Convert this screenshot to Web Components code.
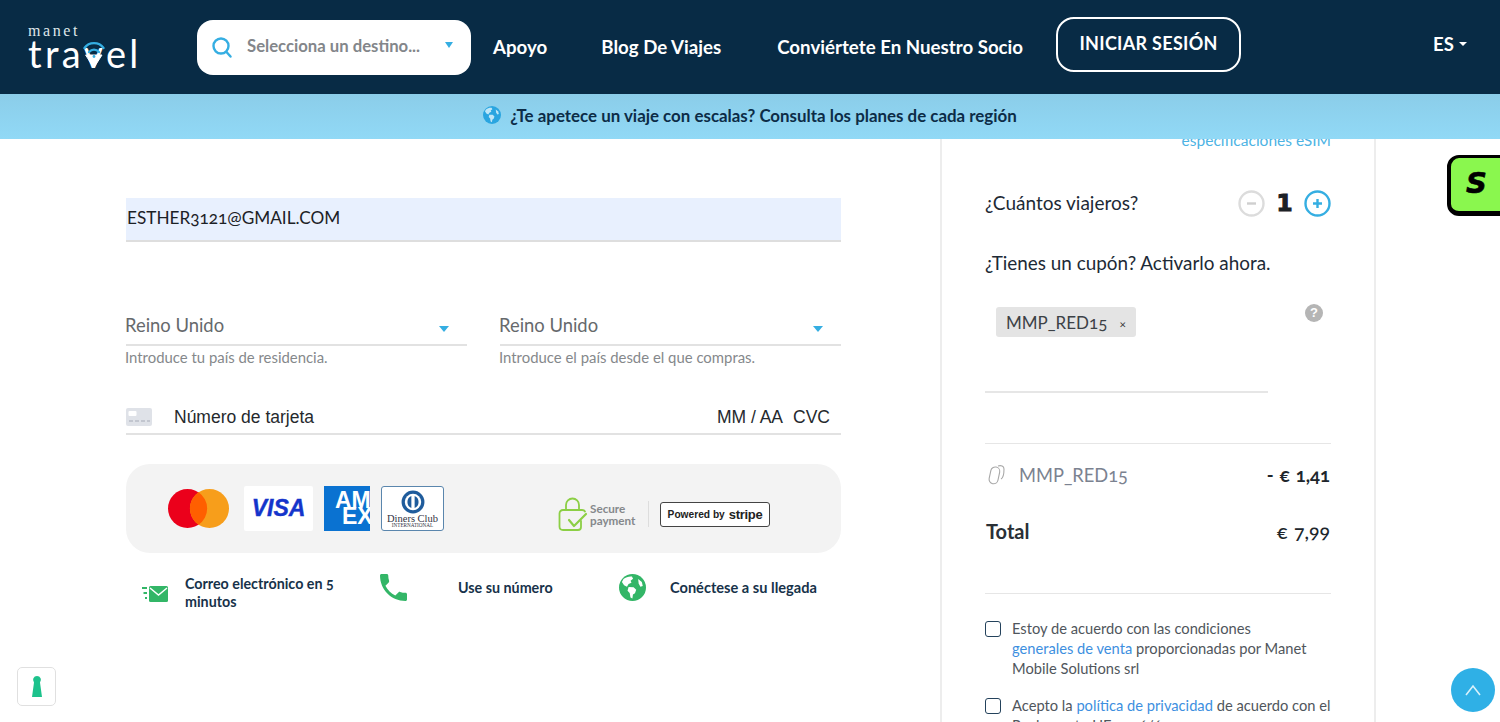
<!DOCTYPE html>
<html lang="es">
<head>
<meta charset="utf-8">
<title>Manet Travel</title>
<style>
  html, body { margin: 0; height: 722px; overflow: hidden; background: #fff; }
  body { font-family: Lato, "Open Sans", sans-serif; color: #1d2a36; font-variant-numeric: oldstyle-nums; }
</style>
</head>
<body>
<mt-header></mt-header>
<mt-promo>¿Te apetece un viaje con escalas? Consulta los planes de cada región</mt-promo>
<mt-page>
  <mt-checkout></mt-checkout>
  <mt-summary></mt-summary>
</mt-page>
<mt-floaters></mt-floaters>

<script>
const globe = (land, sea) => `
  <svg viewBox="0 0 24 24" width="100%" height="100%">
    <circle cx="12" cy="12" r="12" fill="${sea}"/>
    <path d="M4 4.500c2-1.600 5-2.600 7.500-2.200l1 2-2.200 1.600.8 1.800-2.600 1.200-1.400 2.400-2.600-1.400L2.600 7z" fill="${land}"/>
    <path d="M8.500 11.500l4.500.3 2.300 2.300-1.100 3-1.800 1.200-.5 3.500-1.700-1-.7-4-1.900-2z" fill="${land}"/>
    <path d="M17 4.500l3.300 2.700.8 3.500-2.100.6-1.500-2.800z" fill="${land}"/>
  </svg>`;

class MtHeader extends HTMLElement {
  constructor() {
    super();
    this.attachShadow({ mode: 'open' });
  }
  connectedCallback() {
    this.shadowRoot.innerHTML = `
      <style>
        :host { display: flex; align-items: flex-start; height: 94px; background: #082b45; color: #fff; font-weight: 700; font-size: 18.700px; }
        .logo { position: relative; width: 108px; margin: 22px 61px 0 28px; line-height: 1; font-weight: 400; }
        .manet { font: 400 16px "Liberation Serif", serif; letter-spacing: 2.600px; color: #dfe6ea; display: block; height: 15px; }
        .travel { font: 400 38px/32px Lato, sans-serif; letter-spacing: 3.300px; display: block; white-space: nowrap; }
        .pin { position: absolute; left: 54px; top: 18px; width: 24px; height: 28px; }
        .search { box-sizing: border-box; width: 274px; height: 55px; margin-top: 20px; background: #fff; border-radius: 16px; display: flex; align-items: center; padding: 0 18px 0 15px; color: #83868a; font-size: 16.700px; }
        .search svg { width: 20px; height: 21px; margin-right: 15px; flex: none; }
        .search span { flex: 1; white-space: nowrap; margin-top: -3px; }
        .caret { width: 0; height: 0; border: 4.500px solid transparent; border-top: 6px solid #35aee2; border-bottom: 0; margin-top: -5px; }
        nav { display: flex; align-items: center; height: 94px; }
        nav a { white-space: nowrap; margin-top: -1px; }
        .login { box-sizing: border-box; width: 185px; height: 55px; border: 2px solid #fff; border-radius: 18px; margin: 17px 0 0 33px; display: flex; align-items: center; justify-content: center; font-size: 18px; font-weight: 700; letter-spacing: .3px; padding-bottom: 3px; }
        .lang { margin: 33px 0 0 192px; font-size: 18.500px; display: flex; align-items: center; gap: 5px; }
        .lang i { width: 0; height: 0; border: 4px solid transparent; border-top: 4px solid #fff; border-bottom: 0; }
      </style>
      <div class="logo">
        <span class="manet">manet</span>
        <span class="travel">travel</span>
        <svg class="pin" viewBox="0 0 24 28" fill="none" stroke="#35aee2" stroke-width="2.400" stroke-linecap="round">
          <path d="M4 15h16l-8 12.500z" fill="#fff" stroke="#fff" stroke-width="1" stroke-linejoin="round"/>
          <path d="M2.500 8C7 1.500 17 1.500 21.500 8"/>
          <path d="M7 12c3-3.200 7-3.200 10 0"/>
          <circle cx="12" cy="16.500" r="1.400" fill="#35aee2" stroke="none"/>
        </svg>
      </div>
      <div class="search">
        <svg viewBox="0 0 20 21" fill="none" stroke="#35aee2" stroke-width="2.400" stroke-linecap="round">
          <circle cx="9" cy="9" r="7.500"/>
          <path d="M14.500 15l4 4.500"/>
        </svg>
        <span>Selecciona un destino...</span>
        <i class="caret"></i>
      </div>
      <nav>
        <a style="margin-left:22px">Apoyo</a>
        <a style="margin-left:54px">Blog De Viajes</a>
        <a style="margin-left:56px">Conviértete En Nuestro Socio</a>
      </nav>
      <div class="login">INICIAR SESIÓN</div>
      <div class="lang">ES <i></i></div>
    `;
  }
}

class MtPromo extends HTMLElement {
  constructor() {
    super();
    this.attachShadow({ mode: 'open' });
  }
  connectedCallback() {
    this.shadowRoot.innerHTML = `
      <style>
        :host { display: flex; align-items: center; justify-content: center; box-sizing: border-box; height: 45px; padding-bottom: 3px; position: relative; z-index: 2;
          background: linear-gradient(180deg, #8bcde9, #91d9f6); color: #0c2c47; font-size: 16.900px; font-weight: 700; gap: 9px; }
        .g { width: 18px; height: 18px; }
      </style>
      <span class="g">${globe('#bfe6f7', '#2aa5e0')}</span>
      <slot></slot>
    `;
  }
}

class MtPage extends HTMLElement {
  constructor() {
    super();
    this.attachShadow({ mode: 'open' });
  }
  connectedCallback() {
    this.shadowRoot.innerHTML = `
      <style>
        :host { display: grid; grid-template-columns: 940px 436px; height: 583px; overflow: hidden; }
      </style>
      <slot></slot>
    `;
  }
}

class MtSelect extends HTMLElement {
  constructor() {
    super();
    this.attachShadow({ mode: 'open' });
  }
  connectedCallback() {
    this.shadowRoot.innerHTML = `
      <style>
        :host { display: block; }
        .box { height: 35px; border-bottom: 2px solid #e2e2e2; display: flex; justify-content: space-between; align-items: center; font-size: 18.400px; color: #66696c; }
        .box span { margin: -4px 0 0 -1px; }
        .box i { width: 0; height: 0; border: 5px solid transparent; border-top: 6px solid #35aee2; border-bottom: 0; margin: 4px 18px 0 0; }
        .help { font-size: 14.900px; color: #85888b; margin: 3px 0 0 -1px; line-height: 16px; white-space: nowrap; }
      </style>
      <div class="box"><span>${this.getAttribute('value')}</span><i></i></div>
      <div class="help"><slot></slot></div>
    `;
  }
}

class MtFeature extends HTMLElement {
  constructor() {
    super();
    this.attachShadow({ mode: 'open' });
  }
  connectedCallback() {
    this.shadowRoot.innerHTML = `
      <style>
        :host { display: flex; align-items: center; font-size: 14.300px; font-weight: 700; color: #17324a; line-height: 18px; }
        .ic { width: 30px; height: 30px; flex: none; }
      </style>
      <span class="ic"><slot name="icon"></slot></span>
      <span class="t" style="margin-left:${this.getAttribute('gap')}px"><slot></slot></span>
    `;
  }
}
customElements.define('mt-feature', MtFeature);
customElements.define('mt-select', MtSelect);

class MtCheckout extends HTMLElement {
  constructor() {
    super();
    this.attachShadow({ mode: 'open' });
  }
  connectedCallback() {
    this.shadowRoot.innerHTML = `
      <style>
        :host { display: block; padding: 59px 99px 0 126px; }
        .email { box-sizing: border-box; height: 44px; background: #e8f0fe; border-bottom: 2px solid #dedede; padding: 0 0 4px 1px; display: flex; align-items: center; font-size: 17.200px; color: #1c2126; }
        .row { display: grid; grid-template-columns: 341px 341px; gap: 33px; margin-top: 67px; }
        .card { margin-top: 36px; height: 32px; border-bottom: 2px solid #e2e2e2; display: flex; align-items: center; font: 17.500px "Liberation Sans", sans-serif; color: #25292d; }
        .card svg { width: 26px; height: 18px; margin-right: 22px; flex: none; }
        .card .n { flex: 1; }
        .card .d { margin-right: 10px; }
        .card .c { margin-right: 11px; }
        .panel { box-sizing: border-box; height: 89px; margin-top: 29px; background: #f3f3f3; border-radius: 24px; display: flex; align-items: center; padding-left: 42px; }
        .visa { box-sizing: border-box; width: 69px; height: 45px; background: #fff; border-radius: 2px; display: flex; align-items: center; justify-content: center; font: italic 700 23px "Liberation Sans", sans-serif; color: #1434cb; margin-left: 15px; -webkit-text-stroke: .4px #1434cb; }
        .amex { box-sizing: border-box; width: 46px; height: 45px; background: #0a72d1; margin-left: 11px; color: #fff; font: 700 23px/16px "Liberation Sans", sans-serif; overflow: hidden; padding: 6px 0 0 11px; white-space: nowrap; }
        .amex span { display: block; }
        .amex span + span { margin-left: 7px; }
        .diners { box-sizing: border-box; width: 63px; height: 45px; background: #fff; border: 1px solid #5a86ad; border-radius: 3px; margin-left: 11px; display: flex; flex-direction: column; align-items: center; color: #334; }
        .diners svg { width: 24px; height: 24px; margin-top: 3px; flex: none; }
        .diners b { font: 400 10.500px/9px "Liberation Serif", serif; white-space: nowrap; }
        .diners small { font: 400 5.200px/5px "Liberation Serif", serif; white-space: nowrap; }
        .secure { display: flex; align-items: center; margin: 11px 0 0 114px; }
        .secure svg { width: 30px; height: 34px; flex: none; }
        .secure span { font-size: 11.700px; line-height: 12px; font-weight: 700; color: #85888b; margin-left: 2px; width: 47px; }
        .sep { width: 1px; height: 26px; background: #ddd; margin: 0 11px 0 11px; }
        .stripe { box-sizing: border-box; width: 110px; height: 25px; background: #fff; border: 1px solid #444; border-radius: 3px; display: flex; align-items: center; justify-content: center; gap: 4px; font: 700 10.200px "Liberation Sans", sans-serif; color: #222; white-space: nowrap; }
        .stripe b { font-size: 13px; letter-spacing: -.3px; }
        .features { display: flex; align-items: flex-start; margin: 22px 0 0 13px; }
        .up { margin-top: -2px; }
        svg { display: block; }
      </style>
      <div class="email">ESTHER3121@GMAIL.COM</div>
      <div class="row">
        <mt-select value="Reino Unido">Introduce tu país de residencia.</mt-select>
        <mt-select value="Reino Unido">Introduce el país desde el que compras.</mt-select>
      </div>
      <div class="card">
        <svg viewBox="0 0 26 18">
          <rect width="26" height="18" rx="2" fill="#dfe2e8"/>
          <rect x="2.500" y="3" width="8" height="5" rx="1" fill="#fff"/>
          <path d="M3 13h4M9 13h4M15 13h4M21 13h3" stroke="#b9bdc6" stroke-width="1.500"/>
        </svg>
        <span class="n">Número de tarjeta</span>
        <span class="d">MM / AA</span>
        <span class="c">CVC</span>
      </div>
      <div class="panel">
        <svg width="61" height="39" viewBox="0 0 61 39" style="flex:none">
          <circle cx="19.500" cy="19.500" r="19.500" fill="#eb001b"/>
          <circle cx="41.500" cy="19.500" r="19.500" fill="#f79e1b"/>
          <path d="M30.500 3.300a19.500 19.500 0 0 1 0 32.400a19.500 19.500 0 0 1 0-32.400z" fill="#ff5f00"/>
        </svg>
        <div class="visa">VISA</div>
        <div class="amex"><span>AM</span><span>EX</span></div>
        <div class="diners">
          <svg viewBox="0 0 22 22">
            <circle cx="11" cy="11" r="10.500" fill="#1f5c9c"/>
            <circle cx="11" cy="11" r="7.500" fill="#fff"/>
            <path d="M9.500 5.500a6 6 0 0 0 0 11zM12.500 5.500a6 6 0 0 1 0 11z" fill="#1f5c9c"/>
          </svg>
          <b>Diners Club</b>
          <small>INTERNATIONAL</small>
        </div>
        <div class="secure">
          <svg viewBox="0 0 30 34" fill="none" stroke="#8ccf45" stroke-width="1.800" stroke-linecap="round" stroke-linejoin="round">
            <path d="M8 13V8a6.500 6.500 0 0 1 13 0v5"/>
            <path d="M27 14.500c-.5-1-1.500-1.500-3-1.500H5c-2 0-3.500 1.500-3.500 3.500v13C1.500 31.500 3 33 5 33h15c2 0 3-1 3-3v-6"/>
            <path d="M11 23l5 6 12-12" stroke-width="2.200"/>
          </svg>
          <span>Secure payment</span>
          <i class="sep"></i>
          <div class="stripe">Powered by <b>stripe</b></div>
        </div>
      </div>
      <div class="features">
        <mt-feature gap="16" style="width:228px">
          <svg slot="icon" viewBox="0 0 30 30" width="30" height="30">
            <rect x="10" y="8" width="19" height="16" rx="1.500" fill="#33b667"/>
            <path d="M11 10l8.500 7 8.500-7" fill="none" stroke="#fff" stroke-width="1.500"/>
            <path d="M3 10h5M4.500 15h3.500M6 20h2" stroke="#33b667" stroke-width="1.800"/>
          </svg>
          Correo electrónico en 5 minutos
        </mt-feature>
        <mt-feature class="up" gap="61" style="width:252px">
          <svg slot="icon" viewBox="3 3 18 18" width="27" height="27" style="margin:1px 0 0 13px">
            <path d="M6.620 10.790c1.440 2.830 3.760 5.140 6.590 6.590l2.200-2.200c.27-.27.67-.36 1.020-.24 1.120.37 2.330.57 3.570.57.55 0 1 .45 1 1V20c0 .55-.45 1-1 1-9.390 0-17-7.610-17-17 0-.55.45-1 1-1h3.500c.55 0 1 .45 1 1 0 1.250.2 2.450.57 3.570.11.35.03.74-.25 1.020l-2.200 2.200z" fill="#33b667"/>
          </svg>
          Use su número
        </mt-feature>
        <mt-feature class="up" gap="21" style="font-size:14.600px">
          <span slot="icon" style="display:block;width:27px;height:27px;margin-top:1px">${globe('#fff', '#33b667')}</span>
          Conéctese a su llegada
        </mt-feature>
      </div>
    `;
  }
}

class MtCheck extends HTMLElement {
  constructor() {
    super();
    this.attachShadow({ mode: 'open' });
  }
  connectedCallback() {
    this.shadowRoot.innerHTML = `
      <style>
        :host { display: flex; gap: 11px; font-size: 14.700px; line-height: 20px; color: #50565c; }
        i { box-sizing: border-box; width: 16px; height: 16px; border: 1.500px solid #24425c; border-radius: 3px; flex: none; }
        ::slotted(a) { color: #3d8fe0; }
      </style>
      <i></i><div style="margin-top:-3px"><slot></slot></div>
    `;
  }
}
customElements.define('mt-check', MtCheck);

class MtSummary extends HTMLElement {
  constructor() {
    super();
    this.attachShadow({ mode: 'open' });
  }
  connectedCallback() {
    this.shadowRoot.innerHTML = `
      <style>
        :host { display: block; box-sizing: border-box; border-left: 2px solid #ededed; border-right: 2px solid #ededed; padding: 0 43px 0 43px; height: 583px; overflow: hidden; }
        .spec { margin-top: -6px; height: 14px; font-size: 15.500px; line-height: 14px; text-align: right; color: #4db3e4; }
        .row { display: flex; align-items: center; justify-content: space-between; }
        .travelers { margin-top: 42px; height: 28px; font-size: 19px; }
        .travelers > span { margin-top: -2px; }
        .stepper { display: flex; align-items: center; }
        .stepper svg { width: 27px; height: 27px; display: block; }
        .stepper b { width: 39px; text-align: center; font: 700 23px "DejaVu Sans", sans-serif; color: #1d2126; -webkit-text-stroke: 1.200px #1d2126; }
        .coupon { font-size: 18.900px; margin-top: 35px; height: 22px; line-height: 22px; }
        .tagwrap { position: relative; margin-top: 33px; height: 84px; width: 283px; border-bottom: 2px solid #e6e6e6; }
        .chip { position: absolute; left: 11px; top: 0; box-sizing: border-box; width: 140px; height: 30px; background: #e4e4e4; border-radius: 3px; display: flex; align-items: center; padding: 0 10px; font-size: 17px; color: #3c4146; justify-content: space-between; }
        .chip small { font-size: 12px; color: #333; margin-top: 2px; }
        .q { position: absolute; left: 320px; top: -3px; width: 18px; height: 18px; border-radius: 50%; background: #b5b5b5; color: #fff; font: 700 13px/18px "Liberation Sans", sans-serif; text-align: center; }
        .rule { height: 1px; background: #e6e6e6; }
        .disc { margin-top: 19px; height: 24px; font-size: 18.300px; }
        .disc .l { display: flex; align-items: center; color: #7b8290; padding-left: 2px; }
        .disc svg { width: 20px; height: 22px; margin-right: 12px; }
        .disc b, .total b { margin-right: 1px; color: #20262c; word-spacing: 1.500px; }
        .disc b { font-weight: 700; font-size: 18.500px; }
        .total { align-items: baseline; margin-top: 32px; height: 24px; font-size: 20px; font-weight: 700; color: #2a3036; padding-left: 1px; }
        .total b { font-weight: 500; font-size: 19.500px; }
        .rule2 { margin-top: 50px; }
        mt-check { margin-top: 27px; }
        mt-check + mt-check { margin-top: 20px; }
      </style>
      <div class="spec">especificaciones eSIM</div>
      <div class="row travelers">
        <span>¿Cuántos viajeros?</span>
        <div class="stepper">
          <svg viewBox="0 0 27 27" fill="none" stroke="#dcdcdc" stroke-width="2.400">
            <circle cx="13.500" cy="13.500" r="12"/>
            <path d="M9 13.500h9" stroke="#cfcfcf"/>
          </svg>
          <b>1</b>
          <svg viewBox="0 0 27 27" fill="none" stroke="#35aee2" stroke-width="2.400">
            <circle cx="13.500" cy="13.500" r="12"/>
            <path d="M9 13.500h9M13.500 9v9"/>
          </svg>
        </div>
      </div>
      <div class="coupon">¿Tienes un cupón? Activarlo ahora.</div>
      <div class="tagwrap">
        <div class="chip"><span>MMP_RED15</span><small>×</small></div>
        <div class="q">?</div>
      </div>
      <div class="rule" style="margin-top:50px"></div>
      <div class="row disc">
        <span class="l">
          <svg viewBox="0 0 20 22" fill="none" stroke="#a8a8a8" stroke-width="1.100">
            <rect x="3" y="3" width="9" height="17" rx="4.500" transform="rotate(12 8 11)"/>
            <path d="M11 2c3-1 6 0 6 3 0 4-1 9-3 10"/>
          </svg>
          MMP_RED15
        </span>
        <b>- € 1,41</b>
      </div>
      <div class="row total"><span>Total</span><b>€ 7,99</b></div>
      <div class="rule rule2"></div>
      <mt-check>Estoy de acuerdo con las condiciones<br><a>generales de venta</a> proporcionadas por Manet Mobile Solutions srl</mt-check>
      <mt-check>Acepto la <a>política de privacidad</a> de acuerdo con el Reglamento UE 2016/679</mt-check>
    `;
  }
}

class MtFloaters extends HTMLElement {
  constructor() {
    super();
    this.attachShadow({ mode: 'open' });
  }
  connectedCallback() {
    this.shadowRoot.innerHTML = `
      <style>
        :host { display: contents; }
        .s { position: fixed; left: 1447px; top: 155px; box-sizing: border-box; width: 70px; height: 61px; background: #8af74e; border: 3px solid #000; border-bottom-width: 5px; border-left-width: 4px; border-radius: 12px; z-index: 3; font: italic 900 29px/50px "DejaVu Sans", sans-serif; color: #000; padding-left: 15px; -webkit-text-stroke: .6px #000; }
        .key { position: fixed; left: 17px; top: 667px; box-sizing: border-box; width: 39px; height: 39px; background: #fff; border: 1px solid #e0e0e0; border-radius: 5px; display: flex; align-items: center; justify-content: center; }
        .up { position: fixed; left: 1451px; top: 668px; width: 44px; height: 44px; border-radius: 50%; background: #2fb0e6; display: flex; align-items: center; justify-content: center; }
      </style>
      <div class="s">S</div>
      <div class="key">
        <svg width="10" height="21" viewBox="0 0 10 21"><path d="M5 0a4 4 0 0 1 3 6.600L10 21H0L2 6.600A4 4 0 0 1 5 0z" fill="#1dc28c"/></svg>
      </div>
      <div class="up">
        <svg width="18" height="12" viewBox="0 0 18 12" fill="none" stroke="#d8f1fb" stroke-width="1.600"><path d="M2 11l7-9 7 9"/></svg>
      </div>
    `;
  }
}

customElements.define('mt-header', MtHeader);
customElements.define('mt-promo', MtPromo);
customElements.define('mt-page', MtPage);
customElements.define('mt-checkout', MtCheckout);
customElements.define('mt-summary', MtSummary);
customElements.define('mt-floaters', MtFloaters);
</script>
</body>
</html>
